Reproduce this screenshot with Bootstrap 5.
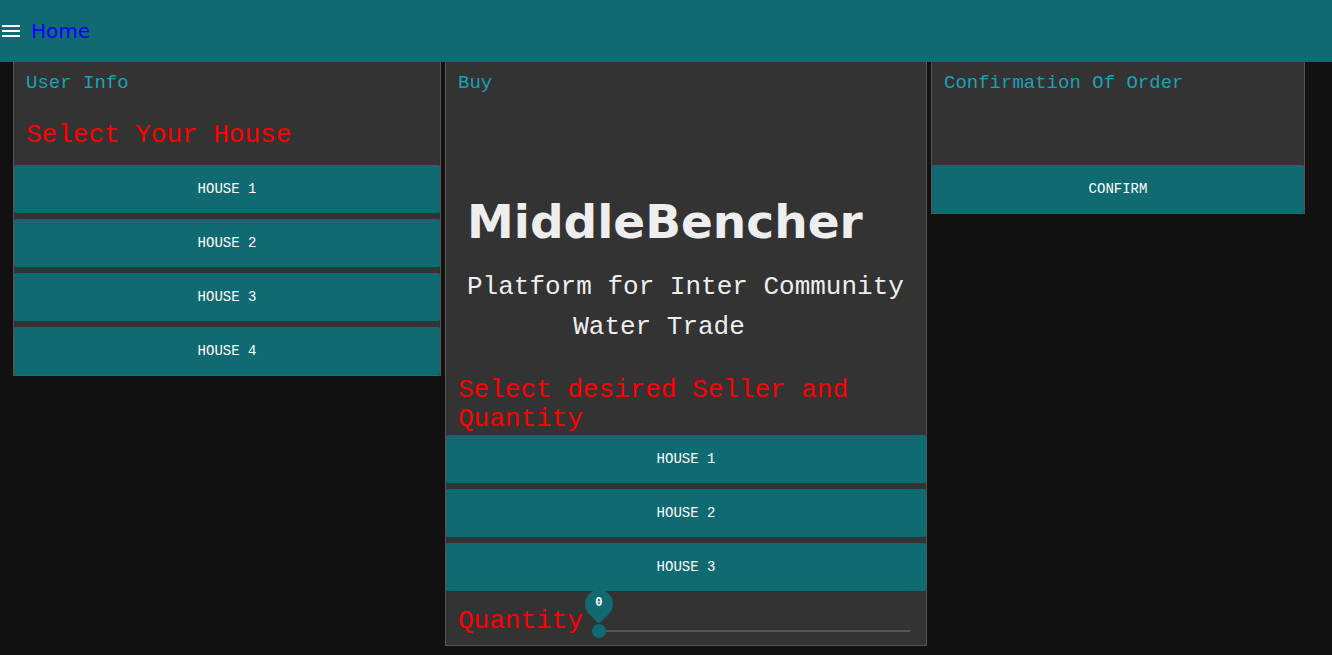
<!DOCTYPE html>
<html lang="en">
<head>
<meta charset="utf-8">
<meta name="viewport" content="width=device-width, initial-scale=1">
<title>MiddleBencher</title>
<link href="https://cdn.jsdelivr.net/npm/bootstrap@5.3.0/dist/css/bootstrap.min.css" rel="stylesheet">
<style>
  :root { --teal: #106a72; --mono: "Liberation Mono", "Courier New", monospace; }
  body { background: #111; color: #eee; font-family: var(--mono); }
  .topbar { background: var(--teal); min-height: 62px; padding: 0 2px; gap: 11px; }
  .topbar a { color: #00f; font: 20px/30px "DejaVu Sans", Verdana, sans-serif; }
  .menu-toggle { line-height: 0; }

  .panels { display: grid; gap: 4px; padding: 0 27px 9px 13px; align-items: start; }
  @media (min-width: 992px) {
    .panels { grid-template-columns: 428fr 482fr 374fr; }
  }
  .panel { --bs-card-bg: #333; --bs-card-border-color: #555; --bs-card-border-radius: 0; color: #eee; border-top: 0; }
  .panel-title { color: #17a2b8; font-size: 19px; line-height: 42px; padding: 0 12px; margin: 0; font-weight: 400; }
  .prompt { color: #f00; font-size: 26px; line-height: 29px; padding: 0 12px; margin: 0; font-weight: 400; }
  .prompt-tall { padding-top: 17px; padding-bottom: 15px; }
  .prompt-seller { margin: 29px 0 1px; }
  .choices { gap: 6px; }
  .btn-teal {
    --bs-btn-bg: var(--teal); --bs-btn-color: #fff;
    --bs-btn-hover-bg: #148089; --bs-btn-hover-color: #fff;
    --bs-btn-active-bg: #0c555b; --bs-btn-active-color: #fff;
    --bs-btn-border-width: 0; --bs-btn-border-radius: 2px;
    --bs-btn-font-size: 14px; --bs-btn-line-height: 48px; --bs-btn-padding-y: 0;
  }
  .confirm-area { margin-top: 61px; }

  .hero { width: 80%; margin: 89px 0 0 21px; text-align: center; }
  .hero h1 { font: 700 47px/58px "DejaVu Sans", Verdana, sans-serif; margin: 0 0 16px; }
  .hero p { font-size: 26px; line-height: 40px; margin: 0; }
  @media (min-width: 1200px) { .hero { white-space: nowrap; } }

  .quantity { height: 54px; }
  .quantity label { padding: 6px 9px 0 12px; }
  .slider-wrap { margin: 0 16px 7px 0; height: 14px; }
  .slider { appearance: none; -webkit-appearance: none; display: block; width: 100%; height: 14px; margin: 0;
    background: linear-gradient(#555, #555) center / 100% 2px no-repeat; }
  .slider::-webkit-slider-thumb { -webkit-appearance: none; width: 14px; height: 14px; border-radius: 50%; background: var(--teal); }
  .slider::-moz-range-thumb { width: 14px; height: 14px; border: 0; border-radius: 50%; background: var(--teal); }
  .bubble { position: absolute; left: -7px; bottom: 20px; width: 28px; height: 28px; z-index: 0;
    font: 700 12px/26px var(--mono); text-align: center; color: #fff; pointer-events: none; }
  .bubble::before { content: ""; position: absolute; inset: 0; z-index: -1; background: var(--teal);
    border-radius: 50% 50% 50% 0; transform: rotate(-45deg); }
</style>
</head>
<body>
<nav class="topbar d-flex align-items-center" aria-label="Main">
  <button type="button" class="menu-toggle border-0 bg-transparent p-0" aria-label="Menu">
    <svg width="18" height="12" viewBox="0 0 18 12" fill="#fff" aria-hidden="true"><path d="M0 0h18v2H0zM0 5h18v2H0zM0 10h18v2H0z"/></svg>
  </button>
  <a href="#" class="text-decoration-none">Home</a>
</nav>

<main class="panels">
  <section class="card panel">
    <h2 class="panel-title">User Info</h2>
    <h3 class="prompt prompt-tall">Select Your House</h3>
    <div class="choices d-grid">
      <button type="button" class="btn btn-teal">HOUSE 1</button>
      <button type="button" class="btn btn-teal">HOUSE 2</button>
      <button type="button" class="btn btn-teal">HOUSE 3</button>
      <button type="button" class="btn btn-teal">HOUSE 4</button>
    </div>
  </section>

  <section class="card panel">
    <h2 class="panel-title">Buy</h2>
    <div class="hero">
      <h1>MiddleBencher</h1>
      <p>Platform for Inter Community<br>Water Trade</p>
    </div>
    <h3 class="prompt prompt-seller">Select desired Seller and Quantity</h3>
    <div class="choices d-grid">
      <button type="button" class="btn btn-teal">HOUSE 1</button>
      <button type="button" class="btn btn-teal">HOUSE 2</button>
      <button type="button" class="btn btn-teal">HOUSE 3</button>
    </div>
    <div class="quantity d-flex">
      <label for="quantity" class="prompt align-self-center">Quantity</label>
      <div class="slider-wrap position-relative flex-grow-1 align-self-end">
        <input type="range" class="slider" id="quantity" min="0" max="100" value="0">
        <output class="bubble" for="quantity">0</output>
      </div>
    </div>
  </section>

  <section class="card panel">
    <h2 class="panel-title">Confirmation Of Order</h2>
    <div class="confirm-area d-grid">
      <button type="button" class="btn btn-teal">CONFIRM</button>
    </div>
  </section>
</main>

<script src="https://cdn.jsdelivr.net/npm/bootstrap@5.3.0/dist/js/bootstrap.bundle.min.js"></script>
<script>
  const slider = document.getElementById('quantity');
  const bubble = document.querySelector('.bubble');
  slider.addEventListener('input', () => {
    const share = slider.value / slider.max;
    bubble.textContent = slider.value;
    bubble.style.left = share * (slider.offsetWidth - 14) - 7 + 'px';
  });
</script>
</body>
</html>
